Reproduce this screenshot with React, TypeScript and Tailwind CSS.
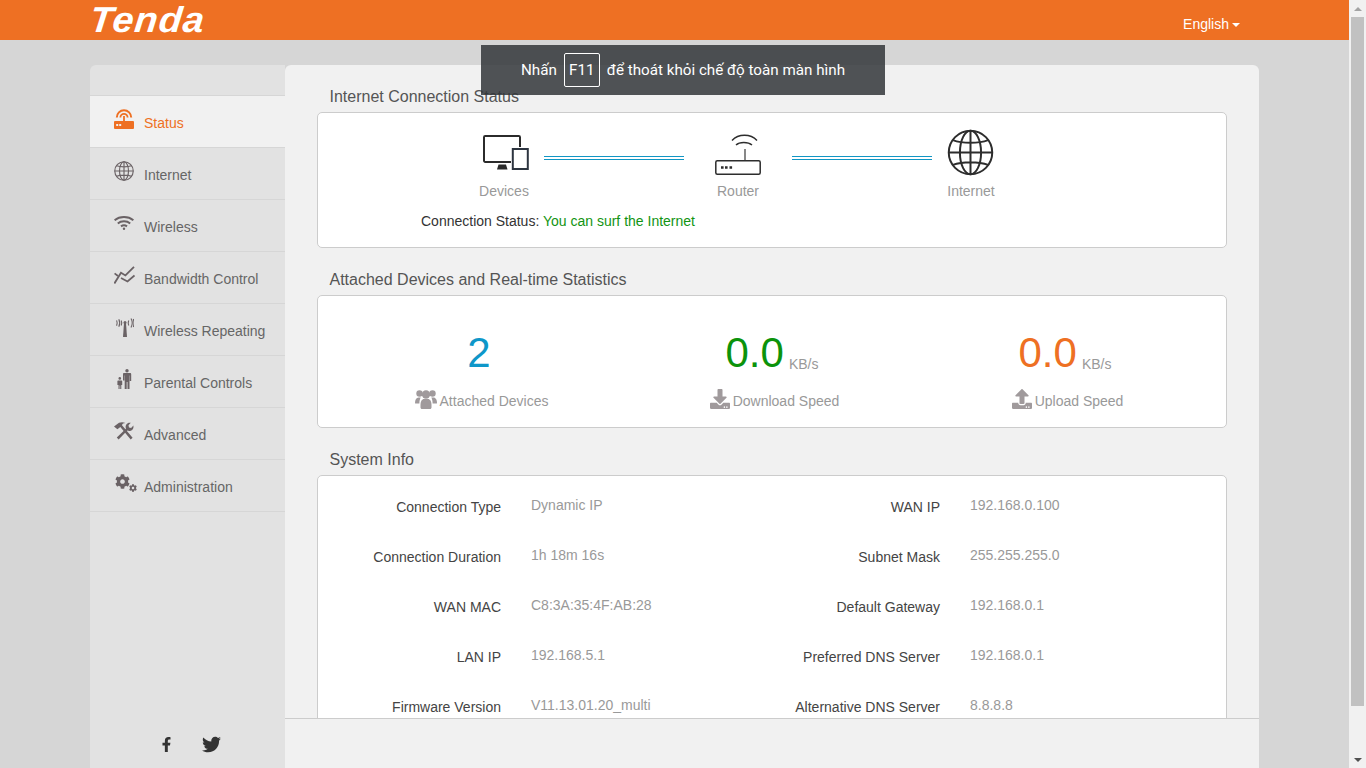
import type { ReactNode } from "react";
import { FaCog, FaDownload, FaFacebookF, FaTwitter, FaUpload } from "react-icons/fa";

const font = "font-['Liberation_Sans',Arial,sans-serif]";

function RouterIcon() {
  return (
    <svg width="20" height="20" viewBox="0 0 20 20" fill="none" stroke="currentColor">
      <path d="M2.800 8.500a7.200 7.200 0 0 1 14.400 0" strokeWidth="2" />
      <path d="M6.400 8.500a3.600 3.600 0 0 1 7.200 0" strokeWidth="1.800" />
      <path d="M10 7v5" strokeWidth="1.800" />
      <rect x="0" y="12" width="20" height="8" rx="1" fill="currentColor" stroke="none" />
      <path d="M2.200 16h2M5.200 16h2" stroke="#f1f1f1" strokeWidth="2" />
    </svg>
  );
}

function GlobeIcon({ size, stroke }: { size: number; stroke: number }) {
  return (
    <svg width={size} height={size} viewBox="0 0 40 40" fill="none" stroke="currentColor" strokeWidth={stroke}>
      <circle cx="20" cy="20" r="18.500" />
      <ellipse cx="20" cy="20" rx="9" ry="18.500" />
      <path d="M20 1.500v37M1.500 20h37M5 9.500c8 3 22 3 30 0M5 30.500c8-3 22-3 30 0" />
    </svg>
  );
}

function WifiIcon() {
  return (
    <svg width="20" height="14" viewBox="0 0 20 14" fill="none" stroke="currentColor" strokeWidth="2">
      <path d="M.6 4.200c5.200-4.200 13.600-4.200 18.800 0" />
      <path d="M3.800 7.400c3.400-2.800 9-2.800 12.400 0" />
      <path d="M7 10.400c1.700-1.300 4.300-1.300 6 0" />
      <circle cx="10" cy="12.800" r="1.200" fill="currentColor" stroke="none" />
    </svg>
  );
}

function BandwidthIcon() {
  return (
    <svg width="21" height="18" viewBox="0 0 21 18" fill="none" stroke="currentColor" strokeWidth="1.800">
      <path d="M.4 17.400 7 6.800l4.400 2.600L20 .8" />
      <path d="M.6 7.400 4 10M7 12l6.500 3.500 7-6" />
    </svg>
  );
}

function RepeatIcon() {
  return (
    <svg width="18" height="19" viewBox="0 0 18 19" fill="none" stroke="currentColor" strokeWidth="1.100">
      <path d="M8 5h2l1 14H7z" fill="currentColor" stroke="none" />
      <circle cx="9" cy="4.500" r="1.500" fill="currentColor" stroke="none" />
      <path d="M5.200 2.500c.8 1.800.8 3.200 0 5M2.800 1.200c1.300 2.600 1.300 5 0 7.600M.6 2.400c.8 1.800.8 3.600 0 5.400" />
      <path d="M12.800 2.500c-.8 1.800-.8 3.200 0 5M15 .6c1.600 2.800 1.600 6 0 8.800M17.300 1c.9 2.600.9 5.600 0 8" />
    </svg>
  );
}

function FamilyIcon() {
  return (
    <svg width="15" height="20" viewBox="0 0 15 20" fill="currentColor">
      <circle cx="10" cy="1.700" r="1.700" />
      <path d="M7 4h6c.8 0 1.200.5 1.200 1.200V12h-1.400V6.400h-.3V20h-2V13h-.8v7h-2V6.400h-.3v5.200H6V5.200C6 4.500 6.400 4 7 4z" />
      <circle cx="2.800" cy="9.400" r="1.300" />
      <path d="M1.400 11.400h2.800c.6 0 1 .4 1 1V16H4.300v4H3.200v-3.400h-.6V20H1.500v-4H.4v-3.600c0-.6.4-1 1-1z" />
    </svg>
  );
}

function ToolsIcon() {
  return (
    <svg width="20" height="18" viewBox="0 0 20 18" fill="currentColor" stroke="none">
      <path d="M0 4.500 5 .8c2-.9 4.400-.9 6.400.2-1.800 0-3.200.8-3.400 2.300L18.600 15.800 16.700 17.600 6.300 5 3.400 7.200z" />
      <path d="M2.800 15.600 11.900 6.800c-.9-2.500.2-5.200 2.700-6 .8-.2 1.500-.2 2.200 0l-2.300 2.500.5 2.100 2.100.5L19.400 3.400c.5 2.300-.5 4.500-2.600 5.300-1.200.4-2.400.3-3.400-.2L4.600 17.500z" />
    </svg>
  );
}

function UsersIcon() {
  return (
    <svg width="22" height="20" viewBox="0 0 22 20" fill="currentColor">
      <circle cx="4.500" cy="4.500" r="3.200" />
      <circle cx="17.500" cy="4.500" r="3.200" />
      <circle cx="11" cy="5.500" r="4.200" />
      <path d="M0 14c0-3.200 1.400-5.500 3.500-5.500h2.200C4.800 10 4.400 12 4.400 14.500H.8C.3 14.500 0 14.400 0 14z" />
      <path d="M22 14c0-3.200-1.400-5.500-3.500-5.500h-2.200c.9 1.500 1.300 3.500 1.300 6h3.600c.5 0 .8-.1.800-.5z" />
      <path d="M5.500 16c0-3.800 1.500-6 3.500-6h4c2 0 3.500 2.200 3.500 6v2.500c0 .9-.6 1.500-1.500 1.500H7c-.9 0-1.500-.6-1.500-1.500z" />
    </svg>
  );
}

function DevicesIcon() {
  return (
    <svg width="46" height="35" viewBox="0 0 46 35" fill="none">
      <path d="M28 27H2.200A1.200 1.200 0 0 1 1 25.800V2.200A1.200 1.200 0 0 1 2.200 1h33.600A1.200 1.200 0 0 1 37 2.200V12" stroke="#2b2b2b" strokeWidth="2" />
      <path d="M15.500 29.500h7.500l1.500 5H14z" fill="#2b2b2b" />
      <rect x="29.800" y="14" width="15" height="20" stroke="#2d3540" strokeWidth="2" fill="#fff" />
    </svg>
  );
}

function RouterLargeIcon() {
  return (
    <svg width="46" height="41" viewBox="0 0 46 41" fill="none" stroke="#2d2d2d">
      <path d="M17 6.500c6.500-7 18.500-7 25 0" strokeWidth="1.400" />
      <path d="M21 11c3.500-3.400 12-3.400 16 0" strokeWidth="1.400" />
      <path d="M30 15v11" stroke="#555" strokeWidth="1.400" />
      <rect x=".8" y="26.800" width="44.400" height="13.400" rx="1.500" strokeWidth="1.500" />
      <path d="M6 33.500h2.600M10 33.500h2.600M14.500 33.500h2.600" strokeWidth="2.400" />
    </svg>
  );
}

function Menu({ icon, label, active }: { icon: ReactNode; label: string; active?: boolean }) {
  return (
    <div
      className={`flex h-[52px] items-center border-b border-[#d6d6d6] pl-[24px] text-sm ${
        active ? "bg-[#f1f1f1] text-[#ee7023]" : "text-[#666]"
      }`}
    >
      <span className={`mb-[5px] flex w-[30px] justify-start ${active ? "" : "text-[#6a6265]"}`}>{icon}</span>
      <span className="pt-[2px]">{label}</span>
    </div>
  );
}

function Title({ children }: { children: ReactNode }) {
  return <h2 className="mt-[15px] h-8 pt-px pl-[12.500px] text-base leading-8 font-normal text-[#555]">{children}</h2>;
}

function Stat({ value, color, unit, icon, label }: { value: string; color: string; unit?: string; icon: ReactNode; label: string }) {
  return (
    <div className="flex w-[293px] flex-col items-center">
      <div className="mr-[5px] flex h-[58px] items-end">
        <span className={`text-[42px] leading-[58px] ${color}`}>{value}</span>
        {unit && <span className="mb-[8px] ml-[5px] text-sm text-[#999]">{unit}</span>}
      </div>
      <div className="mt-[7px] flex items-center text-sm text-[#999]">
        <span className="mr-[3px] mb-[4px] text-[#a09a9c]">{icon}</span>
        {label}
      </div>
    </div>
  );
}

const rows = [
  ["Connection Type", "Dynamic IP", "WAN IP", "192.168.0.100"],
  ["Connection Duration", "1h 18m 16s", "Subnet Mask", "255.255.255.0"],
  ["WAN MAC", "C8:3A:35:4F:AB:28", "Default Gateway", "192.168.0.1"],
  ["LAN IP", "192.168.5.1", "Preferred DNS Server", "192.168.0.1"],
  ["Firmware Version", "V11.13.01.20_multi", "Alternative DNS Server", "8.8.8.8"],
];

function InfoCell({ label, value }: { label: string; value: string }) {
  return (
    <>
      <div className="flex h-[50px] items-center justify-end text-sm text-[#444]">{label}</div>
      <div className="mb-[4px] flex h-[46px] items-center text-sm text-[#999]">{value}</div>
    </>
  );
}

function InfoRow({ r }: { r: string[] }) {
  return (
    <>
      <InfoCell label={r[0]} value={r[1]} />
      <InfoCell label={r[2]} value={r[3]} />
    </>
  );
}

export default function App() {
  return (
    <div className={`relative flex h-[768px] w-[1366px] overflow-hidden ${font}`}>
      <div className="flex w-[1349px] flex-col bg-[#d6d6d6]">
        <header className="flex h-10 shrink-0 items-start justify-between bg-[#ee7023] pl-[90px] text-white">
          <span className="inline-block origin-left scale-x-105 -skew-x-6 text-[36px] leading-[40px] font-bold tracking-[1px] italic">Tenda</span>
          <div className="mt-[15px] mr-[109px] flex items-center text-sm leading-[18px]">
            English
            <span className="mt-[2px] ml-[3px] h-0 w-0 border-x-[4px] border-t-[4px] border-x-transparent border-t-white" />
          </div>
        </header>

        <div className="mx-[90px] mt-[25px] flex min-h-0 flex-1">
          <aside className="flex w-[195px] flex-col rounded-tl-md bg-[#e2e2e2]">
            <div className="h-[31px] border-b border-[#d6d6d6]" />
            <div>
              <Menu active label="Status" icon={<RouterIcon />} />
              <Menu label="Internet" icon={<GlobeIcon size={20} stroke={2.300} />} />
              <Menu label="Wireless" icon={<WifiIcon />} />
              <Menu label="Bandwidth Control" icon={<BandwidthIcon />} />
              <Menu label="Wireless Repeating" icon={<span className="ml-[2px] flex"><RepeatIcon /></span>} />
              <Menu label="Parental Controls" icon={<span className="ml-[3px] flex"><FamilyIcon /></span>} />
              <Menu label="Advanced" icon={<ToolsIcon />} />
              <Menu
                label="Administration"
                icon={
                  <span className="ml-px flex h-[18px] items-end">
                    <FaCog size={15} className="mb-[3px]" />
                    <FaCog size={8} className="-ml-[1px]" />
                  </span>
                }
              />
            </div>
            <div className="mt-auto flex items-center pb-[14px] pl-[69px] text-[#333]">
              <FaFacebookF size={15} />
              <FaTwitter size={19} className="ml-[28px]" />
            </div>
          </aside>

          <main className="flex w-[974px] flex-col rounded-t-md bg-[#f1f1f1]">
            <div className="h-[653px] shrink-0 overflow-hidden px-8">
              <Title>Internet Connection Status</Title>
              <section className="h-[136px] rounded-[5px] border border-[#ccc] bg-white">
                <div className="flex pt-[17px] pl-[146px]">
                  <div className="flex w-20 flex-col items-center">
                    <div className="flex h-[46px] items-start pt-[5px] pl-[4px]"><DevicesIcon /></div>
                    <span className="mt-[5px] text-sm leading-5 text-[#999]">Devices</span>
                  </div>
                  <div className="mt-[26px] h-[4px] w-[140px] border-y border-[#1296c4]" />
                  <div className="flex w-[108px] flex-col items-center">
                    <div className="flex h-[46px] items-start pt-[4px]"><RouterLargeIcon /></div>
                    <span className="mt-[5px] text-sm leading-5 text-[#999]">Router</span>
                  </div>
                  <div className="mt-[26px] h-[4px] w-[140px] border-y border-[#1296c4]" />
                  <div className="flex w-[78px] flex-col items-center">
                    <div className="-mt-px -ml-[2px] h-[47px] text-[#2d2d2d]"><GlobeIcon size={47} stroke={1.700} /></div>
                    <span className="mt-[5px] text-sm leading-5 text-[#999]">Internet</span>
                  </div>
                </div>
                <p className="mt-[10px] pl-[103px] text-sm leading-5 text-[#333]">
                  Connection Status: <span className="text-[#129412]">You can surf the Internet</span>
                </p>
              </section>

              <Title>Attached Devices and Real-time Statistics</Title>
              <section className="flex h-[133px] rounded-[5px] border border-[#ccc] bg-white pt-[28px] pl-[17px]">
                <Stat value="2" color="text-[#0e97c9]" label="Attached Devices" icon={<UsersIcon />} />
                <Stat value="0.0" unit="KB/s" color="text-[#0b930b]" label="Download Speed" icon={<FaDownload size={20} />} />
                <Stat value="0.0" unit="KB/s" color="text-[#ee7023]" label="Upload Speed" icon={<FaUpload size={20} />} />
              </section>

              <Title>System Info</Title>
              <section className="h-[300px] rounded-[5px] border border-[#ccc] bg-white pt-[6px]">
                <div className="grid grid-cols-[183px_197px_182px_1fr] gap-x-[30px]">
                  {rows.map((r) => (
                    <InfoRow key={r[0]} r={r} />
                  ))}
                </div>
              </section>
            </div>
            <div className="flex-1 border-t border-[#ccc]" />
          </main>
        </div>
      </div>

      <div className="flex w-[17px] flex-col items-center bg-[#f1f1f1]">
        <div className="flex h-[17px] items-center justify-center">
          <span className="h-0 w-0 border-x-[4px] border-b-[4px] border-x-transparent border-b-[#a3a3a3]" />
        </div>
        <div className="h-[689px] w-[13px] bg-[#c1c1c1]" />
        <div className="mt-auto flex h-[17px] items-center justify-center">
          <span className="h-0 w-0 border-x-[4px] border-t-[4px] border-x-transparent border-t-[#505050]" />
        </div>
      </div>

      <div className="absolute top-[45px] left-[481px] flex h-[50px] w-[404px] items-center justify-center bg-[#333639]/85 font-['Roboto',sans-serif] text-[15.200px] text-white">
        Nhấn
        <span className="mx-[7px] flex h-[34px] w-[36px] items-center justify-center rounded-[2px] border border-white">F11</span>
        để thoát khỏi chế độ toàn màn hình
      </div>
    </div>
  );
}
